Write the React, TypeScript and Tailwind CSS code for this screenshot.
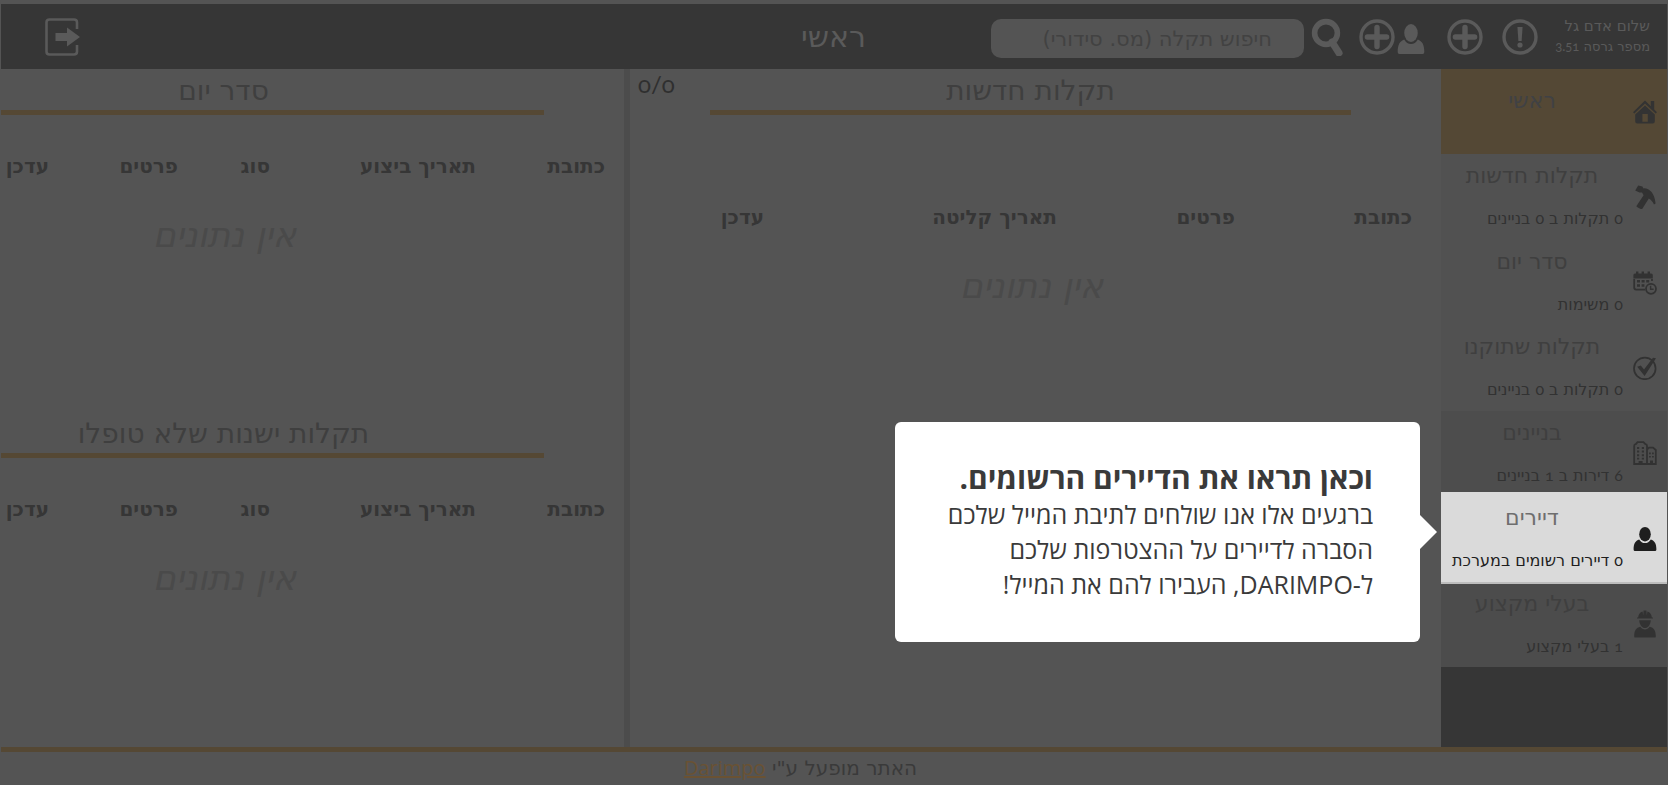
import type { ReactNode } from "react";

const icon = "block h-6 w-6";

const HomeIcon = () => (
  <svg viewBox="0 0 24 24" className={icon} fill="currentColor" aria-hidden="true">
    <path d="M12 0.6 L0 12.2 L1.4 13.6 L12 3.6 L22.6 13.6 L24 12.2 L21.2 9.5 V1 H17.8 V6.2 Z" />
    <path fillRule="evenodd" d="M12 5.4 L2.2 14.6 V21.5 Q2.2 23.6 4.4 23.6 H19.6 Q21.8 23.6 21.8 21.5 V14.6 Z M9.4 14 H14.8 V21.8 H9.4 Z" />
  </svg>
);

const HammerIcon = () => (
  <svg viewBox="0 0 24 24" className={icon} fill="currentColor" aria-hidden="true">
    <path d="M5.2 0.4 L9.4 1.6 L10.4 3.4 C16 2.8 21.6 7.8 22.6 18.6 L21 19.4 C19.8 16.6 18 14.6 15.8 13.4 L9.2 24 Q8.6 24.8 7.6 24 L4 22 Q3.2 21.4 3.8 20.6 L10.6 10.2 L9 7.6 L6.4 7.4 L2.2 5.4 Z" />
  </svg>
);

const CalendarIcon = () => (
  <svg viewBox="0 0 24 24" className={icon} aria-hidden="true">
    <path d="M1.2 8 V16.6 Q1.2 18.6 3.2 18.6 H12 M19 8 V10" fill="none" stroke="currentColor" strokeWidth="1.8" />
    <path d="M0.4 7.4 V4 Q0.4 2.4 2 2.4 H3 V0.6 H5.4 V2.4 H8.6 V0.6 H11 V2.4 H14.6 V0.6 H17 V2.4 H18.2 Q19.8 2.4 19.8 4 V7.4 Z" fill="currentColor" />
    <path d="M4 9 H7 V11.6 H4 Z M8.6 9 H11.6 V11.6 H8.6 Z M13.2 9 H16.2 V11.6 H13.2 Z M4 13.2 H7 V15.8 H4 Z M8.6 13.2 H11.4 V15.8 H8.6 Z" fill="currentColor" />
    <circle cx="18" cy="17.8" r="5" fill="none" stroke="currentColor" strokeWidth="1.8" />
    <path d="M17.6 14.8 V18.2 H20.6" fill="none" stroke="currentColor" strokeWidth="1.4" />
  </svg>
);

const CheckIcon = () => (
  <svg viewBox="0 0 24 24" className={icon} aria-hidden="true">
    <circle cx="11.8" cy="12.4" r="10.8" fill="none" stroke="currentColor" strokeWidth="1.7" />
    <path d="M4.2 10.8 L7.8 9.4 L11 13.6 L20 1.8 L23 2.2 L11.6 20 Z" fill="currentColor" />
  </svg>
);

const BuildingsIcon = () => (
  <svg viewBox="0 0 24 24" className={icon} aria-hidden="true">
    <path d="M1.2 23 V5 Q1.2 3.4 2.8 3.2 L4.6 1.2 H10.4 L12.4 3.2 Q14 3.4 14 5 V23 Z M14 8.6 L16 6.6 H20 L22.8 9 V23 H14" fill="none" stroke="currentColor" strokeWidth="1.8" />
    <path d="M4 6 H6.2 V8 H4 Z M8.8 6 H11 V8 H8.8 Z M4 9.6 H6.2 V11.6 H4 Z M8.8 9.6 H11 V11.6 H8.8 Z M4 13.2 H6.2 V15.2 H4 Z M8.8 13.2 H11 V15.2 H8.8 Z M4 16.8 H6.2 V18.6 H4 Z M8.8 16.8 H11 V18.6 H8.8 Z M5.6 20 H9.6 V23 H5.6 Z M16 11.6 H17.8 V13.2 H16 Z M19 11.6 H20.8 V13.2 H19 Z M16 15 H17.8 V16.6 H16 Z M19 15 H20.8 V16.6 H19 Z M17 19.6 H20 V23 H17 Z" fill="currentColor" />
  </svg>
);

const PersonShape = () => (
  <>
    <ellipse cx="12" cy="7.2" rx="5.8" ry="7.2" />
    <path d="M6.2 12.4 C7.6 14.8 9.6 16 12 16 C14.4 16 16.4 14.8 17.8 12.4 C21.6 13.8 23.4 16.4 23.4 22.4 Q23.4 24 22 24 H2 Q0.6 24 0.6 22.4 C0.6 16.4 2.4 13.8 6.2 12.4 Z" />
  </>
);

const PersonIcon = () => (
  <svg viewBox="0 0 24 24" className={icon} fill="currentColor" aria-hidden="true">
    <PersonShape />
  </svg>
);

const WorkerIcon = () => (
  <svg viewBox="0 0 24 28" className="block h-7 w-6" fill="currentColor" aria-hidden="true">
    <path d="M4 8.6 V7.6 H5.2 C5.2 4.4 7 2.2 9.6 1.4 L10.2 5.4 L10.6 0.6 H13.4 L13.8 5.4 L14.4 1.4 C17 2.2 18.8 4.4 18.8 7.6 H20 V8.6 Z" />
    <path d="M6.2 10.2 H17.8 C17.4 15 15 18 12 18 C9 18 6.6 15 6.2 10.2 Z" />
    <path d="M7.4 16.8 C8.6 18.6 10.2 19.6 12 19.6 C13.8 19.6 15.4 18.6 16.6 16.8 C21 17.8 22.8 20.4 22.8 26.4 Q22.8 27.6 21.6 27.6 H2.4 Q1.2 27.6 1.2 26.4 C1.2 20.4 3 17.8 7.4 16.8 Z" />
  </svg>
);

const PlusCircle = () => (
  <svg viewBox="0 0 36 36" className="block h-9 w-9" fill="none" stroke="currentColor" aria-hidden="true">
    <circle cx="18" cy="18" r="16" strokeWidth="3.4" />
    <path d="M18 8.4 V27.6 M8.4 18 H27.6" strokeWidth="5.4" strokeLinecap="round" />
  </svg>
);

const Num = ({ children }: { children: ReactNode }) => (
  <span className="font-['Lato',sans-serif] oldstyle-nums">{children}</span>
);

type Item = { title: string; sub?: ReactNode; icon: ReactNode; tone: string; titleTone: string; active?: boolean };

const items: Item[] = [
  { title: "ראשי", icon: <HomeIcon />, tone: "bg-[#544835] text-[#333333]", titleTone: "text-[#404144]" },
  { title: "תקלות חדשות", sub: <><Num>0</Num> תקלות ב <Num>0</Num> בניינים</>, icon: <HammerIcon />, tone: "bg-[#515151] text-[#323232]", titleTone: "text-[#3f3f3f]" },
  { title: "סדר יום", sub: <><Num>0</Num> משימות</>, icon: <CalendarIcon />, tone: "bg-[#515151] text-[#323232]", titleTone: "text-[#3f3f3f]" },
  { title: "תקלות שתוקנו", sub: <><Num>0</Num> תקלות ב <Num>0</Num> בניינים</>, icon: <CheckIcon />, tone: "bg-[#515151] text-[#323232]", titleTone: "text-[#3f3f3f]" },
  { title: "בניינים", sub: <><Num>6</Num> דירות ב <Num>1</Num> בניינים</>, icon: <BuildingsIcon />, tone: "bg-[#4d4d4d] text-[#323232]", titleTone: "text-[#3f3f3f]" },
  { title: "דיירים", sub: <><Num>0</Num> דיירים רשומים במערכת</>, icon: <PersonIcon />, tone: "text-[#1e1e1e]", titleTone: "text-[#6e6e6e]", active: true },
  { title: "בעלי מקצוע", sub: <><Num>1</Num> בעלי מקצוע</>, icon: <WorkerIcon />, tone: "bg-[#4c4c4c] text-[#323232]", titleTone: "text-[#3f3f3f]" },
];

function Sidebar() {
  return (
    <nav className="w-[226px] shrink-0 bg-[#363636]">
      <ul className="grid h-[598px] auto-rows-fr">
        {items.map((item) => (
          <li key={item.title} className={`relative ${item.active ? "z-10" : ""}`}>
            {item.active && <span className="absolute -top-1 -bottom-[2px] inset-x-0 border-b-2 border-[#bdbdbd] bg-[#dadada]" />}
            <a href="#" className={`relative flex h-full items-center ${item.tone}`}>
              <span className="flex w-11 shrink-0 justify-center">{item.icon}</span>
              <span className={`flex h-full flex-1 flex-col ${item.sub ? "pt-1" : "pt-3.5"}`}>
                <span className={`h-11 text-center text-[22px] leading-[36px] ${item.titleTone}`}>{item.title}</span>
                {item.sub && <span className="whitespace-nowrap text-base leading-8">{item.sub}</span>}
              </span>
            </a>
          </li>
        ))}
      </ul>
    </nav>
  );
}

function Header() {
  return (
    <header className="flex h-[65px] items-center bg-[#363636] pr-[17px] pl-11 text-[#5a5a5a]">
      <div className="w-[93px] shrink-0 leading-5">
        <p className="text-[15px] leading-5">שלום אדם גל</p>
        <p className="whitespace-nowrap text-[13px] leading-5">מספר גרסה <Num>3.51</Num></p>
      </div>
      <button type="button" aria-label="הודעות" className="mr-[19px]">
        <svg viewBox="0 0 36 36" className="block h-9 w-9" fill="none" stroke="currentColor" aria-hidden="true">
          <circle cx="18" cy="18" r="16" strokeWidth="3.4" />
          <path d="M15.4 8 H20.6 L19.6 22 H16.4 Z" fill="currentColor" stroke="none" />
          <circle cx="18" cy="26" r="2.6" fill="currentColor" stroke="none" />
        </svg>
      </button>
      <button type="button" aria-label="תקלה חדשה" className="mr-[19px]">
        <PlusCircle />
      </button>
      <button type="button" aria-label="דייר חדש" className="mr-[22px] flex items-center gap-[2px]">
        <svg viewBox="0 0 24 24" preserveAspectRatio="none" className="mt-1 block h-[30px] w-7" fill="currentColor" aria-hidden="true">
          <PersonShape />
        </svg>
        <PlusCircle />
      </button>
      <button type="button" aria-label="חיפוש" className="mr-4">
        <svg viewBox="0 0 32 38" className="block h-[38px] w-8" fill="none" stroke="currentColor" aria-hidden="true">
          <circle cx="15" cy="15" r="11.4" strokeWidth="5.6" />
          <path d="M21 24 L28 35" strokeWidth="7" strokeLinecap="round" />
        </svg>
      </button>
      <input
        type="text"
        aria-label="חיפוש תקלה"
        placeholder="חיפוש תקלה (מס. סידורי)"
        className="mt-1 mr-[7px] h-[39px] w-[313px] rounded-[10px] bg-[#545454] pr-8 pl-4 text-[21px] placeholder:text-[#424242]"
      />
      <h1 className="mr-[125px] text-[30px] leading-9">ראשי</h1>
      <button type="button" aria-label="יציאה" className="mr-auto">
        <svg viewBox="0 0 36 38" className="block h-[38px] w-9" aria-hidden="true">
          <path d="M32 11 V4.5 Q32 1.5 29 1.5 H4.5 Q1.5 1.5 1.5 4.5 V33.5 Q1.5 36.5 4.5 36.5 H29 Q32 36.5 32 33.5 V27" fill="none" stroke="currentColor" strokeWidth="2.6" />
          <path d="M10.5 15 H22 V9.5 L35 19 L22 28.5 V23 H10.5 Z" fill="currentColor" />
        </svg>
      </button>
    </header>
  );
}

type Column = { label: string; width: string };

function DataTable({ columns }: { columns: Column[] }) {
  return (
    <table className="w-full table-fixed text-[20px] leading-7 text-[#363636]">
      <thead>
        <tr>
          {columns.map((c) => (
            <th key={c.label} scope="col" className={`whitespace-nowrap text-right font-bold ${c.width}`}>{c.label}</th>
          ))}
        </tr>
      </thead>
    </table>
  );
}

const taskColumns: Column[] = [
  { label: "כתובת", width: "w-[129px]" },
  { label: "תאריך ביצוע", width: "w-[206px]" },
  { label: "סוג", width: "w-[92px]" },
  { label: "פרטים", width: "w-[129px]" },
  { label: "עדכן", width: "w-auto" },
];

const issueColumns: Column[] = [
  { label: "כתובת", width: "w-[177px]" },
  { label: "פרטים", width: "w-[178px]" },
  { label: "תאריך קליטה", width: "w-[293px]" },
  { label: "עדכן", width: "w-auto" },
];

function SidePanel({ title }: { title: string }) {
  return (
    <section className="min-h-[335px]">
      <div className="mr-20 border-b-[5px] border-[#554834] pr-[98px]">
        <h2 className="h-[41px] text-center text-[28px] leading-[44px] text-[#3f3f3f]">{title}</h2>
      </div>
      <div className="mr-[19px] pt-[37px]">
        <DataTable columns={taskColumns} />
      </div>
      <p className="pt-[35px] pr-44 text-center text-[35px] leading-10 italic text-[#4a4a4a]">אין נתונים</p>
    </section>
  );
}

export default function App() {
  return (
    <div dir="rtl" lang="he" className="flex min-h-screen flex-col bg-[#545454] px-px pt-1 font-['DejaVu_Sans',sans-serif]">
      <Header />
      <div className="flex flex-1">
        <Sidebar />
        <main className="relative flex-1">
          <span className="absolute top-0 left-2 text-2xl leading-[30px] text-[#2f2f2f]"><Num>0/0</Num></span>
          <div className="mr-[90px] ml-20 border-b-[5px] border-[#554834]">
            <h2 className="h-[41px] text-center text-[28px] leading-[44px] text-[#3f3f3f]">תקלות חדשות</h2>
          </div>
          <div className="mr-[29px] ml-20 pt-[88px]">
            <DataTable columns={issueColumns} />
          </div>
          <p className="pt-[35px] pr-2 text-center text-[35px] leading-10 italic text-[#4a4a4a]">אין נתונים</p>

          <div role="dialog" aria-labelledby="tour-title" className="absolute top-[353px] right-[21px] z-20 h-[220px] w-[525px] rounded-md bg-white px-[47px] pt-[37px] font-['Open_Sans',sans-serif] text-[#3a3a3a]">
            <svg viewBox="0 0 18 36" className="absolute top-[92px] -right-[17px] h-9 w-[18px]" fill="#ffffff" aria-hidden="true">
              <path d="M0 0 L18 18 L0 36 Z" />
            </svg>
            <h3 id="tour-title" className="whitespace-nowrap text-[30px] leading-[38px] font-bold">וכאן תראו את הדיירים הרשומים.</h3>
            <p className="whitespace-nowrap text-[25px] leading-[35px]">
              ברגעים אלו אנו שולחים לתיבת המייל שלכם
              <br />
              הסברה לדיירים על ההצטרפות שלכם
              <br />
              ל-DARIMPO, העבירו להם את המייל!
            </p>
          </div>
        </main>
        <aside className="flex w-[629px] shrink-0 flex-col gap-2 border-r-[6px] border-[#4c4c4c]">
          <SidePanel title="סדר יום" />
          <SidePanel title="תקלות ישנות שלא טופלו" />
        </aside>
      </div>
      <footer className="h-[38px] border-t-[5px] border-[#554834] pr-[67px] text-center text-[20px] leading-8 text-[#3a3a3a]">
        האתר מופעל ע"י <a href="#" className="font-['Open_Sans',sans-serif] text-[#6a5233] underline">Darimpo</a>
      </footer>
    </div>
  );
}
